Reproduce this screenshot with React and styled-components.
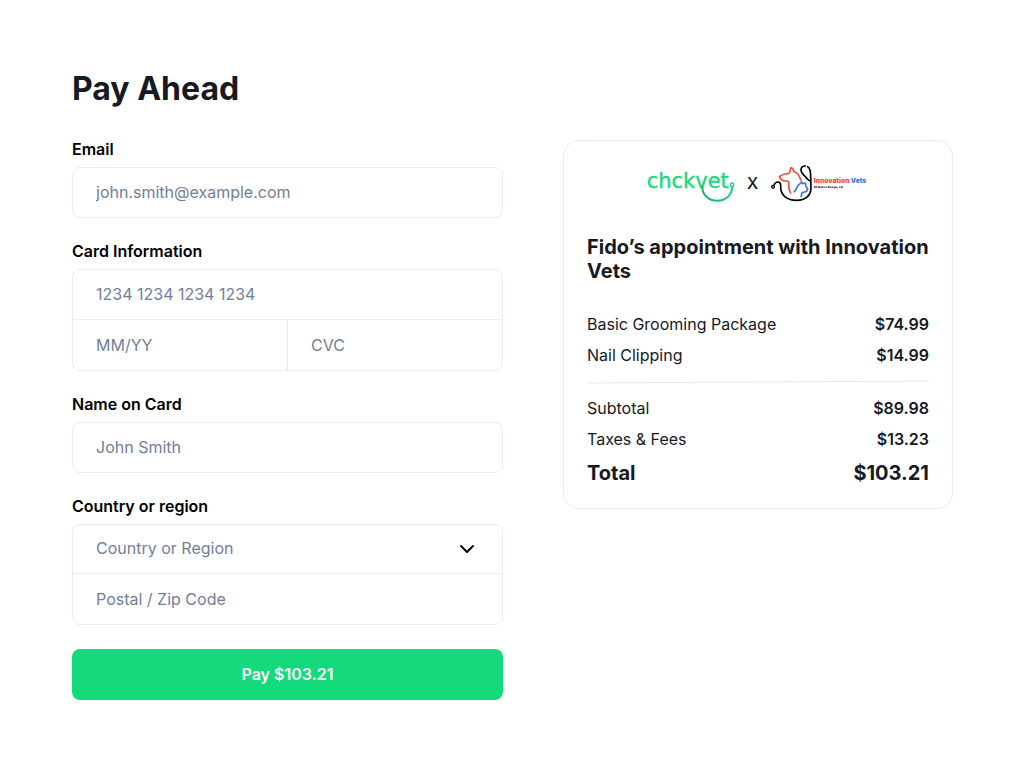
import React, { useState } from 'react';
import styled, { createGlobalStyle } from 'styled-components';
import { ChevronDown } from 'lucide-react';

const GlobalStyle = createGlobalStyle`
  * {
    box-sizing: border-box;
  }
  body {
    margin: 0;
    background-color: white;
    color: #171923;
    font-family: Inter, 'Liberation Sans', sans-serif;
    font-size: 16px;
    line-height: 19px;
  }
`
const Page = styled.main`
  padding: 69px 72px;
`
const Title = styled.h1`
  margin: 0 0 32px;
  font-size: 32px;
  line-height: 39px;
  font-weight: 700;
`
const Columns = styled.div`
  display: grid;
  grid-template-columns: minmax(0, 431fr) minmax(0, 390fr);
  gap: 60px;
  align-items: start;
  @media (max-width: 760px) {
    grid-template-columns: minmax(0, 1fr);
  }
`
const Form = styled.form`
  display: flex;
  flex-flow: column nowrap;
  gap: 24px;
`
const Field = styled.div`
  display: flex;
  flex-flow: column nowrap;
  gap: 8px;
`
const Label = styled.label`
  color: black;
  font-weight: 600;
`
const InputBox = styled.div`
  border: 1px solid #e8eef5;
  border-radius: 8px;
  overflow: hidden;
`
const InputRow = styled.div`
  position: relative;
  display: flex;
  flex-flow: row nowrap;
  & + & {
    border-top: 1px solid #e8eef5;
  }
`
const Input = styled.input`
  flex: 1;
  min-width: 0;
  height: ${(props) => props.$height || 49}px;
  padding: 0 23px 1px;
  border: none;
  outline: none;
  color: #171923;
  background-color: transparent;
  font: inherit;
  & + & {
    border-left: 1px solid #e2e8f0;
  }
  &::placeholder {
    color: #718096;
    opacity: 1;
  }
`
const Select = styled.select`
  flex: 1;
  min-width: 0;
  height: 48px;
  padding: 0 48px 1px 23px;
  border: none;
  outline: none;
  appearance: none;
  cursor: pointer;
  color: ${(props) => (props.$empty ? '#718096' : '#171923')};
  background-color: transparent;
  font: inherit;
`
const SelectIcon = styled(ChevronDown)`
  position: absolute;
  top: 12px;
  right: 23px;
  color: black;
  pointer-events: none;
`
const PayButton = styled.button`
  height: 51px;
  border: none;
  border-radius: 8px;
  cursor: pointer;
  color: white;
  background-color: #14da7b;
  font: inherit;
  font-weight: 600;
`
const Card = styled.section`
  padding: 23px;
  border: 1px solid #e8ecf5;
  border-radius: 16px;
`
const Logos = styled.div`
  display: flex;
  flex-flow: row nowrap;
  justify-content: center;
  align-items: center;
  gap: 12px;
  margin-bottom: 32px;
`
const Times = styled.span`
  font-weight: 500;
`
const CardTitle = styled.h2`
  margin: 0 0 32px;
  font-size: 20px;
  line-height: 24px;
  font-weight: 700;
`
const Lines = styled.dl`
  display: flex;
  flex-flow: column nowrap;
  gap: 12px;
  margin: 0;
`
const Line = styled.div`
  display: flex;
  flex-flow: row nowrap;
  justify-content: space-between;
  font-size: ${(props) => (props.$total ? 20 : 16)}px;
  line-height: ${(props) => (props.$total ? 24 : 19)}px;
  dt {
    font-weight: ${(props) => (props.$total ? 700 : 400)};
  }
  dd {
    margin: 0;
    font-weight: ${(props) => (props.$total ? 700 : 600)};
  }
`
const Divider = styled.svg`
  display: block;
  width: 100%;
  height: 2px;
  margin: 16px 0;
  overflow: visible;
`

function ChckvetLogo () {
  return (
    <svg width="88" height="39" viewBox="21 12 264 117" role="img" aria-label="chckvet">
      <defs>
        <linearGradient id="smile" x1="0" y1="0" x2="1" y2="0">
          <stop offset="0" stopColor="#19b56b" />
          <stop offset="1" stopColor="#1bd079" />
        </linearGradient>
      </defs>
      <text x="20" y="85" fontFamily="'DejaVu Sans', sans-serif" fontSize="63" fill="#16da7b" stroke="#16da7b" strokeWidth="1">chckvet</text>
      <path d="M187 80 C187 106 206 122 232 122 C258 122 276 104 277 80" fill="none" stroke="url(#smile)" strokeWidth="6" strokeLinecap="round" />
      <circle cx="276" cy="74" r="5" fill="white" stroke="#1bd079" strokeWidth="4" />
    </svg>
  )
}

function InnovationVetsLogo () {
  return (
    <svg width="99" height="39" viewBox="15 12 297 117" role="img" aria-label="Innovation Vets">
      <g fill="none" strokeWidth="5" strokeLinecap="round" strokeLinejoin="round">
        <g stroke="black">
          <circle cx="24" cy="80" r="4" strokeWidth="4" />
          <path d="M27 75 C29 69 34 66 40 66 C46 67 48 73 47 82 C47 106 66 121 95 121 C122 121 138 106 138 84 L137 50 C137 34 134 23 128 20" />
          <path d="M121 18 C113 18 108 23 108 30 C108 40 118 46 124 53 C129 59 130 62 137 63" />
        </g>
        <path d="M77 99 C71 92 71 85 71 65 L66 63 L55 62 C48 61 46 57 43 49 C51 47 54 41 65 41 L72 40 C76 36 75 29 78 23 C82 24 85 28 87 35 L95 38 C102 42 104 54 108 61" stroke="#f0524a" />
        <path d="M88 95 C96 87 95 75 107 70 L110 66 L114 71 L121 69 L123 79 L128 86 C127 93 123 96 119 96 L112 98 C108 101 111 106 108 109" stroke="#3b78e7" />
      </g>
      <text x="146" y="69" fontFamily="Inter, sans-serif" fontSize="20" fontWeight="900">
        <tspan fill="#f0524a">Innovation</tspan>
        <tspan fill="#3b78e7"> Vets</tspan>
      </text>
      <text x="146" y="83" fontFamily="'DejaVu Sans', sans-serif" fontSize="8" fontWeight="700" fill="black">Of Baton Rouge, LA</text>
    </svg>
  )
}

const services = [
  { name: 'Basic Grooming Package', price: '$74.99' },
  { name: 'Nail Clipping', price: '$14.99' },
];

const totals = [
  { name: 'Subtotal', price: '$89.98' },
  { name: 'Taxes & Fees', price: '$13.23' },
  { name: 'Total', price: '$103.21', total: true },
];

function PriceList ({ items }) {
  return (
    <Lines>
      {items.map((item) => (
        <Line key={item.name} $total={item.total}>
          <dt>{item.name}</dt>
          <dd>{item.price}</dd>
        </Line>
      ))}
    </Lines>
  )
}

function PaymentForm () {
  const [country, setCountry] = useState('');
  return (
    <Form onSubmit={(e) => e.preventDefault()}>
      <Field>
        <Label htmlFor="email">Email</Label>
        <InputBox>
          <InputRow>
            <Input id="email" type="email" placeholder="john.smith@example.com" />
          </InputRow>
        </InputBox>
      </Field>
      <Field>
        <Label htmlFor="cardNumber">Card Information</Label>
        <InputBox>
          <InputRow>
            <Input id="cardNumber" placeholder="1234 1234 1234 1234" />
          </InputRow>
          <InputRow>
            <Input $height={50} aria-label="Expiration date" placeholder="MM/YY" />
            <Input $height={50} aria-label="Security code" placeholder="CVC" />
          </InputRow>
        </InputBox>
      </Field>
      <Field>
        <Label htmlFor="name">Name on Card</Label>
        <InputBox>
          <InputRow>
            <Input id="name" placeholder="John Smith" />
          </InputRow>
        </InputBox>
      </Field>
      <Field>
        <Label htmlFor="country">Country or region</Label>
        <InputBox>
          <InputRow>
            <Select id="country" value={country} $empty={!country} onChange={(e) => setCountry(e.target.value)}>
              <option value="" disabled>Country or Region</option>
              <option value="US">United States</option>
              <option value="CA">Canada</option>
            </Select>
            <SelectIcon size={24} aria-hidden="true" />
          </InputRow>
          <InputRow>
            <Input $height={50} aria-label="Postal / Zip Code" placeholder="Postal / Zip Code" />
          </InputRow>
        </InputBox>
      </Field>
      <PayButton type="submit">Pay $103.21</PayButton>
    </Form>
  )
}

function App () {
  return (
    <>
      <GlobalStyle />
      <Page>
        <Title>Pay Ahead</Title>
        <Columns>
          <PaymentForm />
          <Card>
            <Logos>
              <ChckvetLogo />
              <Times>X</Times>
              <InnovationVetsLogo />
            </Logos>
            <CardTitle>Fido’s appointment with Innovation Vets</CardTitle>
            <PriceList items={services} />
            <Divider viewBox="0 0 100 2" preserveAspectRatio="none" aria-hidden="true">
              <line x1="0" y1="2" x2="100" y2="0" stroke="#e2e8f0" vectorEffect="non-scaling-stroke" />
            </Divider>
            <PriceList items={totals} />
          </Card>
        </Columns>
      </Page>
    </>
  )
}

export default App;
